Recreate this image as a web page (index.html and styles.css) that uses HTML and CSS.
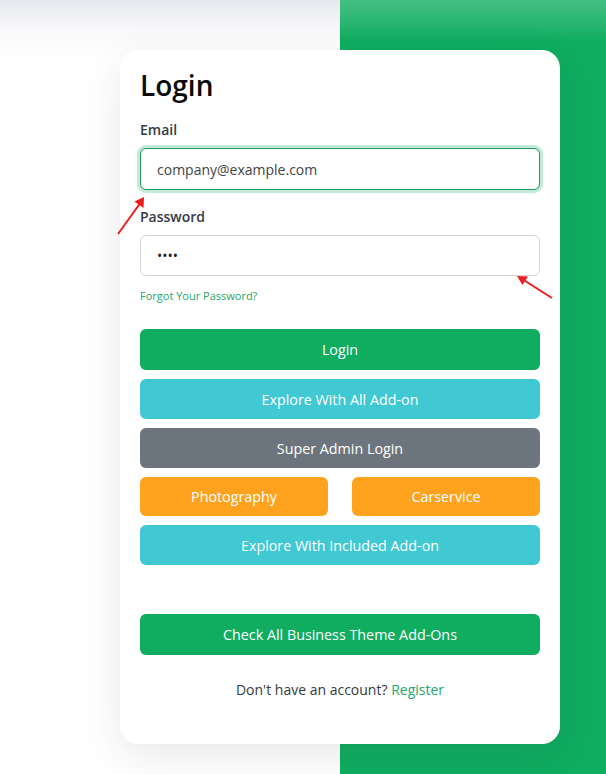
FILE: index.html
```html
<!DOCTYPE html>
<html lang="en">
<head>
<meta charset="utf-8">
<title>Login</title>
<link rel="stylesheet" href="styles.css">
</head>
<body>
<div class="page">
  <div class="card">
    <h1 class="title">Login</h1>
    <form class="form">
      <label class="label" for="email">Email</label>
      <input id="email" class="input input-focus" type="text" value="company@example.com">
      <label class="label label-pass" for="pass">Password</label>
      <input id="pass" class="input input-pass" type="password" value="1234">
      <a class="forgot" href="#">Forgot Your Password?</a>
      <div class="buttons">
        <button type="button" class="btn btn-green">Login</button>
        <button type="button" class="btn btn-cyan">Explore With All Add-on</button>
        <button type="button" class="btn btn-gray">Super Admin Login</button>
        <div class="btn-row">
          <button type="button" class="btn btn-orange">Photography</button>
          <button type="button" class="btn btn-orange">Carservice</button>
        </div>
        <button type="button" class="btn btn-cyan">Explore With Included Add-on</button>
      </div>
      <button type="button" class="btn btn-green btn-check">Check All Business Theme Add-Ons</button>
      <p class="register">Don't have an account? <a href="#">Register</a></p>
    </form>
  </div>
  <svg class="arrow arrow-left" width="40" height="44" viewBox="0 0 40 44">
    <line x1="4" y1="40" x2="27" y2="8" stroke="#ee1c1c" stroke-width="2"/>
    <polygon points="30,3 29.5,14 20.5,7.5" fill="#ee1c1c"/>
  </svg>
  <svg class="arrow arrow-right" width="44" height="30" viewBox="0 0 44 30">
    <line x1="40" y1="26" x2="10" y2="7" stroke="#ee1c1c" stroke-width="2"/>
    <polygon points="5,4 16,4.5 10.5,13" fill="#ee1c1c"/>
  </svg>
</div>
</body>
</html>
```
FILE: styles.css
```css
* { box-sizing: border-box; }
html, body { margin: 0; padding: 0; }
body {
  font-family: "Open Sans", "Noto Sans", sans-serif;
  color: #333;
  width: 606px;
  height: 774px;
  overflow: hidden;
  background:
    linear-gradient(to bottom, rgba(230,232,238,1) 0px, rgba(245,245,248,0.6) 30px, rgba(255,255,255,0) 60px) 0 0 / 340px 100% no-repeat,
    linear-gradient(to bottom, rgba(255,255,255,0.22) 0px, rgba(255,255,255,0.12) 20px, rgba(255,255,255,0) 42px) 340px 0 / 266px 100% no-repeat,
    linear-gradient(to right, #ffffff 0, #ffffff 340px, #0fad60 340px, #0fad60 100%);
}
.page {
  position: relative;
  width: 606px;
  height: 774px;
  padding: 50px 0 0 120px;
}
.card {
  width: 440px;
  height: 694px;
  background: #fff;
  border-radius: 18px;
  padding: 17px 20px 20px;
  box-shadow: 0 12px 40px rgba(40, 40, 60, 0.10);
}
.title {
  margin: 0;
  font-size: 28px;
  line-height: 36px;
  font-weight: 600;
  color: #0a0a0a;
}
.form { display: flex; flex-direction: column; margin-top: 16px; }
.label {
  font-size: 14px;
  line-height: 21px;
  font-weight: 600;
  color: #343a45;
}
.label-pass { margin-top: 16px; }
.input {
  margin-top: 8px;
  width: 400px;
  height: 42px;
  border: 1px solid #d0d3d8;
  border-radius: 6px;
  padding: 0 16px;
  font-family: inherit;
  font-size: 14px;
  color: #444;
  background: #fff;
  outline: none;
}
.input-focus {
  border-color: #1e9a63;
  box-shadow: 0 0 0 3px rgba(16, 173, 96, 0.25);
}
.input-pass { height: 41px; font-size: 14px; color: #222; letter-spacing: 0; }
.forgot {
  margin-top: 12px;
  font-size: 11px;
  line-height: 15px;
  color: #23a86a;
  text-decoration: none;
  align-self: flex-start;
}
.buttons {
  margin-top: 26px;
  display: flex;
  flex-direction: column;
  gap: 9px;
}
.btn-row { display: grid; grid-template-columns: 1fr 1fr; gap: 24px; }
.btn {
  height: 40px;
  border: none;
  border-radius: 6px;
  font-family: inherit;
  font-size: 14.3px;
  color: #fff;
  cursor: pointer;
  width: 100%;
}
.btn-green { background: #10ad60; }
.btn-green:first-child { height: 41px; }
.btn-cyan { background: #40c8d3; }
.btn-gray { background: #6c757d; }
.btn-orange { background: #ffa31f; height: 39px; }
.btn-check { margin-top: 49px; height: 41px; }
.register {
  margin: 25px 0 0;
  text-align: center;
  font-size: 14px;
  line-height: 20px;
  color: #343a40;
}
.register a { color: #23a86a; text-decoration: none; }
.arrow { position: absolute; }
.arrow-left { left: 114px; top: 194px; }
.arrow-right { left: 512px; top: 272px; }
```
